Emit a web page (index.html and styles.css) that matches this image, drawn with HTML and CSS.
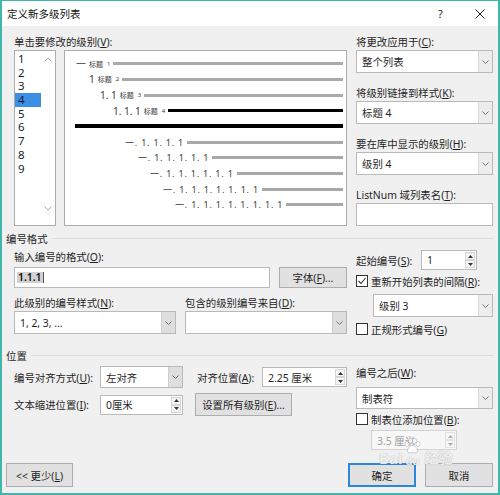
FILE: index.html
```html
<!DOCTYPE html>
<html lang="zh-CN">
<head>
<meta charset="utf-8">
<title>定义新多级列表</title>
<link rel="stylesheet" href="styles.css">
</head>
<body>
<div class="dialog">
  <header class="titlebar">
    <span class="title">定义新多级列表</span>
    <span class="tb-btn help">?</span>
    <span class="tb-btn close"><svg width="10" height="10" viewBox="0 0 10 10"><path d="M0.5 0.5L9.5 9.5M9.5 0.5L0.5 9.5" stroke="#222" stroke-width="1"/></svg></span>
  </header>

  <main class="content">
    <section class="top">
      <div class="levels-col">
        <div class="lbl">单击要修改的级别(<u>V</u>):</div>
        <div class="levels-row">
          <div class="listbox">
            <ul class="items">
              <li>1</li><li>2</li><li>3</li><li class="sel">4</li><li>5</li><li>6</li><li>7</li><li>8</li><li>9</li>
            </ul>
            <div class="vscroll">
              <span class="sb-btn"><svg width="8" height="5" viewBox="0 0 8 5"><path d="M0.5 4.5L4 1L7.5 4.5" fill="none" stroke="#aaaaaa"/></svg></span>
              <span class="sb-btn"><svg width="8" height="5" viewBox="0 0 8 5"><path d="M0.5 0.5L4 4L7.5 0.5" fill="none" stroke="#aaaaaa"/></svg></span>
            </div>
          </div>

          <div class="preview">
            <div class="pv-row i1"><span class="num">一</span><span class="tag">标题</span><span class="lv">1</span><i class="bar"></i></div>
            <div class="pv-row i2"><span class="num">1</span><span class="tag">标题</span><span class="lv">2</span><i class="bar"></i></div>
            <div class="pv-row i3"><span class="num">1. 1</span><span class="tag">标题</span><span class="lv">3</span><i class="bar"></i></div>
            <div class="pv-row i4"><span class="num">1. 1. 1</span><span class="tag">标题</span><span class="lv">4</span><i class="bar on"></i></div>
            <div class="pv-row i5"><i class="bar on thick"></i></div>
            <div class="pv-row i6 seq"><span class="num">一. 1. 1. 1. 1</span><i class="bar"></i></div>
            <div class="pv-row i7 seq"><span class="num">一. 1. 1. 1. 1. 1</span><i class="bar"></i></div>
            <div class="pv-row i8 seq"><span class="num">一. 1. 1. 1. 1. 1. 1</span><i class="bar"></i></div>
            <div class="pv-row i9 seq"><span class="num">一. 1. 1. 1. 1. 1. 1. 1</span><i class="bar"></i></div>
            <div class="pv-row i10 seq"><span class="num">一. 1. 1. 1. 1. 1. 1. 1. 1</span><i class="bar"></i></div>
          </div>
        </div>
      </div>

      <div class="side-col">
        <div class="lbl">将更改应用于(<u>C</u>):</div>
        <div class="combo field"><span class="val">整个列表</span><span class="drop"><svg width="7" height="4" viewBox="0 0 7 4"><path d="M0.5 0.5L3.5 3.5L6.5 0.5" fill="none" stroke="#707070"/></svg></span></div>
        <div class="lbl">将级别链接到样式(<u>K</u>):</div>
        <div class="combo field"><span class="val">标题 4</span><span class="drop"><svg width="7" height="4" viewBox="0 0 7 4"><path d="M0.5 0.5L3.5 3.5L6.5 0.5" fill="none" stroke="#707070"/></svg></span></div>
        <div class="lbl">要在库中显示的级别(<u>H</u>):</div>
        <div class="combo field"><span class="val">级别 4</span><span class="drop"><svg width="7" height="4" viewBox="0 0 7 4"><path d="M0.5 0.5L3.5 3.5L6.5 0.5" fill="none" stroke="#707070"/></svg></span></div>
        <div class="lbl">ListNum 域列表名(<u>T</u>):</div>
        <div class="textbox field"></div>
      </div>
    </section>

    <div class="group">编号格式</div>

    <section class="fmt">
      <div class="fmt-left">
        <div class="lbl">输入编号的格式(<u>O</u>):</div>
        <div class="input-row">
          <div class="textbox fmt-input"><span class="picked">1.1.1</span><i class="caret"></i></div>
          <div class="btn font-btn"><span>字体(<u>F</u>)...</span></div>
        </div>
        <div class="lbl-row">
          <div class="lbl half">此级别的编号样式(<u>N</u>):</div>
          <div class="lbl half">包含的级别编号来自(<u>D</u>):</div>
        </div>
        <div class="combo-row">
          <div class="combo half"><span class="val">1, 2, 3, ...</span><span class="drop dark"><svg width="7" height="4" viewBox="0 0 7 4"><path d="M0.5 0.5L3.5 3.5L6.5 0.5" fill="none" stroke="#707070"/></svg></span></div>
          <div class="combo half"><span class="val"></span><span class="drop dark"><svg width="7" height="4" viewBox="0 0 7 4"><path d="M0.5 0.5L3.5 3.5L6.5 0.5" fill="none" stroke="#707070"/></svg></span></div>
        </div>
      </div>

      <div class="fmt-right">
        <div class="start-row">
          <span class="start-lbl">起始编号(<u>S</u>):</span>
          <div class="spin start-spin">
            <span class="val">1</span>
            <span class="arr"><span><svg width="5" height="3" viewBox="0 0 5 3"><path d="M0 3L2.5 0L5 3Z" fill="#333"/></svg></span><span><svg width="5" height="3" viewBox="0 0 5 3"><path d="M0 0L2.5 3L5 0Z" fill="#333"/></svg></span></span>
          </div>
        </div>
        <div class="check-row restart">
          <span class="check"><svg width="10" height="10" viewBox="0 0 10 10"><path d="M1.5 5L4 7.5L8.5 2" fill="none" stroke="#333" stroke-width="1.1"/></svg></span>
          <span>重新开始列表的间隔(<u>R</u>):</span>
        </div>
        <div class="combo restart-combo"><span class="val">级别 3</span><span class="drop"><svg width="7" height="4" viewBox="0 0 7 4"><path d="M0.5 0.5L3.5 3.5L6.5 0.5" fill="none" stroke="#707070"/></svg></span></div>
        <div class="check-row legal">
          <span class="check"></span>
          <span>正规形式编号(<u>G</u>)</span>
        </div>
      </div>
    </section>

    <div class="group pos-group">位置</div>

    <section class="pos">
      <div class="pos-left">
        <div class="pos-row r-align">
          <span class="pos-lbl">编号对齐方式(<u>U</u>):</span>
          <div class="combo align-combo"><span class="val">左对齐</span><span class="drop dark"><svg width="7" height="4" viewBox="0 0 7 4"><path d="M0.5 0.5L3.5 3.5L6.5 0.5" fill="none" stroke="#707070"/></svg></span></div>
          <span class="pos-lbl at-lbl">对齐位置(<u>A</u>):</span>
          <div class="spin at-spin">
            <span class="val">2.25 厘米</span>
            <span class="arr"><span><svg width="5" height="3" viewBox="0 0 5 3"><path d="M0 3L2.5 0L5 3Z" fill="#333"/></svg></span><span><svg width="5" height="3" viewBox="0 0 5 3"><path d="M0 0L2.5 3L5 0Z" fill="#333"/></svg></span></span>
          </div>
        </div>
        <div class="pos-row r-indent">
          <span class="pos-lbl">文本缩进位置(<u>I</u>):</span>
          <div class="spin indent-spin">
            <span class="val">0厘米</span>
            <span class="arr"><span><svg width="5" height="3" viewBox="0 0 5 3"><path d="M0 3L2.5 0L5 3Z" fill="#333"/></svg></span><span><svg width="5" height="3" viewBox="0 0 5 3"><path d="M0 0L2.5 3L5 0Z" fill="#333"/></svg></span></span>
          </div>
          <div class="btn all-btn"><span>设置所有级别(<u>E</u>)...</span></div>
        </div>
      </div>

      <div class="pos-right">
        <div class="lbl">编号之后(<u>W</u>):</div>
        <div class="combo after-combo"><span class="val">制表符</span><span class="drop"><svg width="7" height="4" viewBox="0 0 7 4"><path d="M0.5 0.5L3.5 3.5L6.5 0.5" fill="none" stroke="#707070"/></svg></span></div>
        <div class="check-row tabstop">
          <span class="check"></span>
          <span>制表位添加位置(<u>B</u>):</span>
        </div>
        <div class="spin off tab-spin">
          <span class="val">3.5 厘米</span>
          <span class="arr"><span><svg width="5" height="3" viewBox="0 0 5 3"><path d="M0 3L2.5 0L5 3Z" fill="#a8a8a8"/></svg></span><span><svg width="5" height="3" viewBox="0 0 5 3"><path d="M0 0L2.5 3L5 0Z" fill="#a8a8a8"/></svg></span></span>
        </div>
      </div>
    </section>

    <footer class="footer">
      <div class="btn less-btn"><span>&lt;&lt; 更少(<u>L</u>)</span></div>
      <div class="btn ok-btn">确定</div>
      <div class="btn cancel-btn">取消</div>
    </footer>
  </main>

  <div class="wm">
    <span class="wm-bai">Bai</span>
    <span class="wm-du">
      <svg width="18" height="17" viewBox="0 0 18 17">
        <ellipse cx="4" cy="6" rx="2" ry="2.6"/>
        <ellipse cx="7.5" cy="2.8" rx="2" ry="2.5"/>
        <ellipse cx="11.5" cy="2.8" rx="2" ry="2.5"/>
        <ellipse cx="15" cy="6" rx="2" ry="2.6"/>
        <path d="M9.5 7.5C6.5 7.5 4 11.5 4.5 13.5C5 15.5 7.5 15 9.5 14.5C11.5 15 14 15.5 14.5 13.5C15 11.5 12.5 7.5 9.5 7.5Z"/>
      </svg>
      <span>du</span>
    </span>
    <span class="wm-jy">经验</span>
  </div>
</div>
</body>
</html>
```

FILE: styles.css
```css
* {
  box-sizing: border-box;
}

body {
  margin: 0;
  font-family: "Noto Sans", "Noto Sans CJK SC", sans-serif;
  font-size: 10.4px;
  color: #1f1f1f;
  background: #fff;
}

u {
  text-decoration-thickness: 1px;
  text-underline-offset: 1px;
}

/* window frame */
.dialog {
  position: relative;
  width: 500px;
  height: 495px;
  border: 2px solid #41b7ab;
  border-top-width: 1px;
  background: #f0f0f0;
  display: flex;
  flex-direction: column;
}

.titlebar {
  flex: none;
  height: 25px;
  background: #fff;
  display: flex;
  align-items: center;
}

.title {
  flex: 1;
  padding-left: 5px;
  font-size: 10.5px;
  color: #111;
}

.tb-btn {
  height: 25px;
  display: flex;
  align-items: center;
  justify-content: center;
}

.help {
  width: 41px;
  font-size: 11px;
  color: #222;
}

.close {
  width: 37px;
}

.content {
  flex: 1;
  display: flex;
  flex-direction: column;
  padding: 0 5px 6px 4px;
}

.lbl {
  height: 16px;
  line-height: 16px;
  white-space: nowrap;
}

/* shared controls */
.combo {
  height: 23px;
  border: 1px solid #b9b9b9;
  background: #fff;
  display: flex;
}

.combo .val,
.spin .val {
  flex: 1;
  display: flex;
  align-items: center;
  padding-left: 5px;
  white-space: nowrap;
}

.combo .drop {
  width: 14px;
  display: flex;
  align-items: center;
  justify-content: center;
  background: #ededed;
  border-left: 1px solid #dadada;
}

.combo .drop.dark {
  background: #dedede;
  border-left-color: #cfcfcf;
}

.textbox {
  height: 23px;
  border: 1px solid #b9b9b9;
  background: #fff;
}

.spin {
  display: flex;
  border: 1px solid #b9b9b9;
  background: #fff;
}

.spin .arr {
  width: 11px;
  display: flex;
  flex-direction: column;
  padding: 1px 1px 1px 0;
}

.spin .arr span {
  flex: 1;
  display: flex;
  align-items: center;
  justify-content: center;
  border: 1px solid #d6d6d6;
  background: #f4f4f4;
}

.spin.off {
  background: #f7f7f7;
  border-color: #d3d3d3;
  color: #a0a0a0;
}

.spin.off .arr span {
  border-color: #e2e2e2;
  background: #f7f7f7;
}

.btn {
  height: 23px;
  border: 1px solid #adadad;
  background: #e1e1e1;
  display: flex;
  align-items: center;
  justify-content: center;
  white-space: nowrap;
}

.check-row {
  height: 14px;
  display: flex;
  align-items: center;
  gap: 3px;
  white-space: nowrap;
}

.check {
  width: 12px;
  height: 12px;
  border: 1px solid #333;
  background: #fff;
  display: flex;
  align-items: center;
  justify-content: center;
}

/* levels + preview */
.top {
  display: flex;
  margin-top: 8px;
  padding-left: 8px;
}

.levels-col {
  width: 333px;
}

.levels-row {
  display: flex;
  gap: 8px;
  height: 176px;
}

.listbox {
  width: 42px;
  border: 1px solid #adadad;
  background: #fff;
  display: flex;
}

.items {
  list-style: none;
  margin: 0;
  padding: 1px 0 0;
  width: 26px;
  font-size: 11.5px;
  color: #222;
}

.items li {
  height: 13.7px;
  line-height: 13.7px;
  padding-left: 3px;
}

.items .sel {
  background: #3d8fe4;
  color: #0e1c36;
}

.vscroll {
  flex: 1;
  display: flex;
  flex-direction: column;
  justify-content: space-between;
  padding-bottom: 8px;
}

.sb-btn {
  height: 17px;
  display: flex;
  align-items: center;
  justify-content: center;
}

.preview {
  flex: 1;
  border: 1px solid #adadad;
  background: #fff;
  padding: 5px 3px 0 0;
}

.pv-row {
  height: 15.67px;
  display: flex;
  align-items: center;
  white-space: nowrap;
  color: #3c3c3c;
  font-size: 9px;
}

.pv-row .num {
  font-size: 10px;
}

.pv-row.seq .num {
  font-size: 9px;
  letter-spacing: 0.8px;
}

.pv-row .tag {
  font-size: 7px;
  margin-left: 3px;
}

.pv-row .lv {
  font-size: 6px;
  margin-left: 4px;
}

.pv-row .bar {
  flex: 1;
  height: 3px;
  margin-left: 3px;
  background: #a9a9a9;
}

.pv-row .bar.on {
  background: #000;
}

.pv-row .bar.thick {
  height: 4px;
  margin-left: 0;
}

.i1 { padding-left: 11px; }
.i2 { padding-left: 24px; }
.i3 { padding-left: 35px; }
.i4 { padding-left: 48px; }
.i5 { padding-left: 10px; }
.i6 { padding-left: 60px; }
.i7 { padding-left: 73px; }
.i8 { padding-left: 85px; }
.i9 { padding-left: 98px; }
.i10 { padding-left: 110px; }

.side-col {
  margin-left: 9px;
  width: 137px;
}

.side-col .field {
  margin-bottom: 12px;
}

.side-col .field:last-child {
  margin-bottom: 0;
}

/* group headings with etched rule */
.group {
  height: 16px;
  margin-top: 4px;
  display: flex;
  align-items: center;
  white-space: nowrap;
}

.group::after {
  content: "";
  flex: 1;
  height: 1px;
  margin-left: 4px;
  background: #dcdcdc;
}

.pos-group {
  margin-top: 11px;
}

/* numbering format */
.fmt {
  display: flex;
  padding-left: 8px;
  margin-top: 3px;
}

.fmt-left {
  width: 333px;
}

.input-row {
  display: flex;
  gap: 9px;
  margin-top: 2px;
}

.fmt-input {
  width: 256px;
  height: 21px;
  display: flex;
  align-items: center;
  padding-left: 2px;
}

.picked {
  background: #d2d2d2;
  color: #111;
  font-weight: 600;
  line-height: 11px;
  padding: 0 1px;
}

.caret {
  width: 1px;
  height: 11px;
  background: #555;
}

.font-btn {
  width: 68px;
  height: 21px;
}

.lbl-row,
.combo-row {
  display: flex;
  gap: 9px;
}

.lbl-row {
  margin-top: 7px;
}

.half {
  width: 162px;
}

.fmt-right {
  margin-left: 9px;
  width: 137px;
}

.start-row {
  display: flex;
  align-items: center;
  height: 20px;
  margin-top: 1px;
}

.start-lbl {
  width: 65px;
  white-space: nowrap;
}

.start-spin {
  width: 56px;
  height: 20px;
}

.restart {
  margin-top: 4px;
}

.restart-combo {
  margin: 6px 0 0 17px;
}

.legal {
  margin-top: 5px;
}

/* position */
.pos {
  display: flex;
  align-items: flex-start;
  padding-left: 8px;
  margin-top: 3px;
}

.pos-left {
  width: 333px;
}

.pos-row {
  display: flex;
  align-items: center;
}

.r-align {
  height: 22px;
}

.r-indent {
  height: 23px;
  margin-top: 5px;
}

.pos-lbl {
  width: 86px;
  white-space: nowrap;
}

.align-combo {
  width: 83px;
  height: 22px;
}

.at-lbl {
  width: 65px;
  margin-left: 14px;
}

.at-spin {
  width: 85px;
  height: 20px;
}

.indent-spin {
  width: 83px;
  height: 20px;
}

.all-btn {
  width: 97px;
  margin-left: 12px;
}

.pos-right {
  margin-left: 9px;
  width: 137px;
  margin-top: -1px;
}

.after-combo {
  height: 22px;
  margin-top: 6px;
}

.tabstop {
  margin-top: 3px;
}

.tab-spin {
  width: 86px;
  height: 20px;
  margin: 4px 0 0 15px;
}

/* dialog buttons */
.footer {
  margin-top: auto;
  display: flex;
  gap: 9px;
}

.less-btn {
  width: 67px;
  height: 24px;
  margin-right: auto;
}

.ok-btn,
.cancel-btn {
  width: 68px;
  height: 24px;
}

.ok-btn {
  border: 2px solid #2b87d8;
}

/* site watermark laid over the corner */
.wm {
  position: absolute;
  left: 377px;
  top: 437px;
  display: flex;
  align-items: flex-end;
  gap: 1px;
  color: rgba(255, 255, 255, 0.85);
  text-shadow: 0 0 1px rgba(100, 100, 100, 0.6);
  font-family: "Noto Sans", "Noto Sans CJK SC", sans-serif;
  font-weight: 700;
  pointer-events: none;
}

.wm-bai {
  font-size: 15px;
  line-height: 16px;
}

.wm-du {
  display: flex;
  flex-direction: column;
  align-items: center;
  font-size: 11px;
  line-height: 11px;
}

.wm-du svg {
  fill: rgba(255, 255, 255, 0.85);
  stroke: rgba(110, 110, 110, 0.5);
  stroke-width: 0.6;
}

.wm-jy {
  font-size: 14px;
  line-height: 16px;
  margin-left: 2px;
}
```
